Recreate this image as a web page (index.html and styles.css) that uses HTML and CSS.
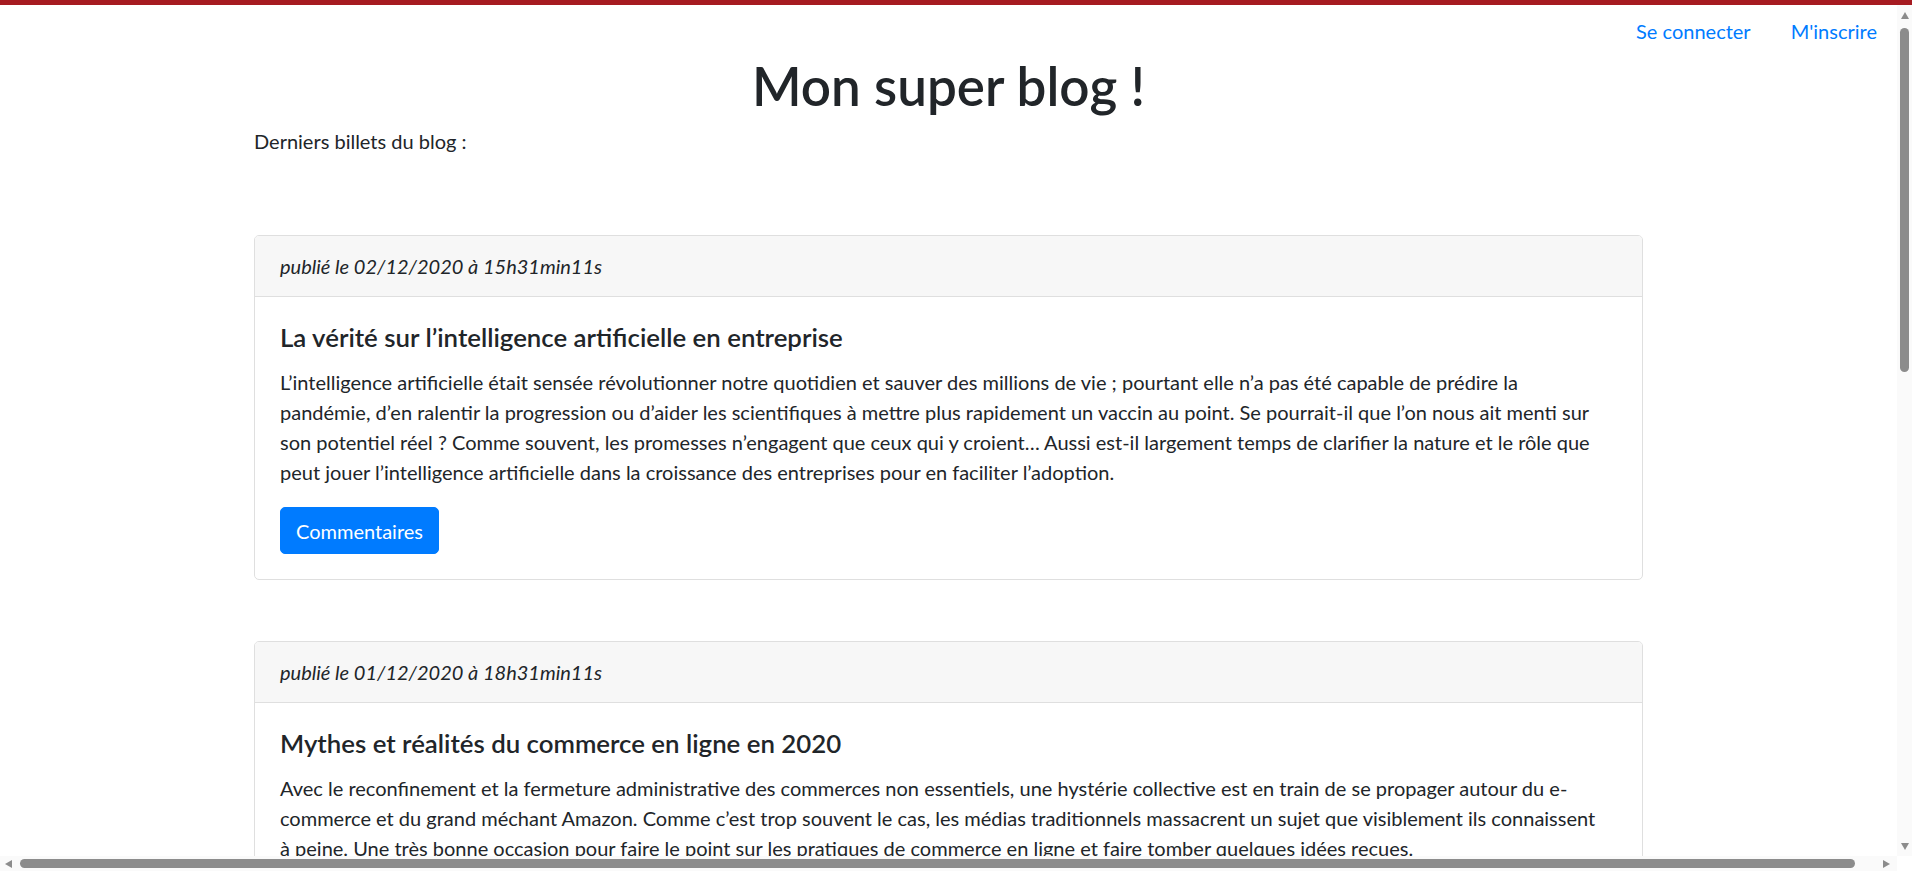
FILE: index.html
```html
<!DOCTYPE html>
<html lang="fr">
<head>
<meta charset="utf-8">
<title>Mon super blog !</title>
<link rel="stylesheet" href="styles.css">
</head>
<body>
<div class="topbar"></div>
<div class="viewport">
  <div class="page">
    <nav class="topnav">
      <a class="nav-link" href="#">Se connecter</a>
      <a class="nav-link" href="#">M'inscrire</a>
    </nav>
    <div class="container">
      <h1 class="site-title">Mon super blog !</h1>
      <p class="intro">Derniers billets du blog :</p>

      <div class="card">
        <div class="card-header"><em>publié le 02/12/2020 à 15h31min11s</em></div>
        <div class="card-body">
          <h5 class="card-title">La vérité sur l’intelligence artificielle en entreprise</h5>
          <p class="card-text">L’intelligence artificielle était sensée révolutionner notre quotidien et sauver des millions de vie ; pourtant elle n’a pas été capable de prédire la<br>pandémie, d’en ralentir la progression ou d’aider les scientifiques à mettre plus rapidement un vaccin au point. Se pourrait-il que l’on nous ait menti sur<br>son potentiel réel ? Comme souvent, les promesses n’engagent que ceux qui y croient… Aussi est-il largement temps de clarifier la nature et le rôle que<br>peut jouer l’intelligence artificielle dans la croissance des entreprises pour en faciliter l’adoption.</p>
          <a class="btn" href="#">Commentaires</a>
        </div>
      </div>

      <div class="card">
        <div class="card-header"><em>publié le 01/12/2020 à 18h31min11s</em></div>
        <div class="card-body">
          <h5 class="card-title">Mythes et réalités du commerce en ligne en 2020</h5>
          <p class="card-text">Avec le reconfinement et la fermeture administrative des commerces non essentiels, une hystérie collective est en train de se propager autour du e-<br>commerce et du grand méchant Amazon. Comme c’est trop souvent le cas, les médias traditionnels massacrent un sujet que visiblement ils connaissent<br>à peine. Une très bonne occasion pour faire le point sur les pratiques de commerce en ligne et faire tomber quelques idées reçues.</p>
          <a class="btn" href="#">Commentaires</a>
        </div>
      </div>
    </div>
  </div>
  <div class="vscroll">
    <span class="arrow arrow-up"></span>
    <span class="vthumb"></span>
    <span class="vspace"></span>
    <span class="arrow arrow-down"></span>
  </div>
</div>
<div class="hscroll">
  <div class="htrack">
    <span class="arrow arrow-left"></span>
    <span class="hthumb"></span>
    <span class="arrow arrow-right"></span>
  </div>
  <div class="corner"></div>
</div>
</body>
</html>
```
FILE: styles.css
```css
html, body {
  margin: 0;
  height: 100%;
  overflow: hidden;
}
body {
  display: flex;
  flex-direction: column;
  font-family: Lato, "Open Sans", "Noto Sans", sans-serif;
  font-size: 20px;
  line-height: 30px;
  color: #212529;
  background: #fff;
}
.topbar {
  height: 5px;
  background: #a61b21;
  flex: none;
}
.viewport {
  flex: 1;
  min-height: 0;
  display: flex;
}
.page {
  flex: 1;
  min-width: 0;
  overflow: hidden;
}
.topnav {
  display: flex;
  justify-content: flex-end;
  padding-top: 1px;
}
.nav-link {
  display: block;
  padding: 10px 20px;
  color: #007bff;
  text-decoration: none;
}
.container {
  width: 1389px;
  margin: 0 auto;
}
.site-title {
  margin: 0 0 10px;
  font-size: 53px;
  line-height: 60px;
  font-weight: 600;
  text-align: center;
}
.intro {
  margin: 0 0 79px;
}
.card {
  border: 1px solid #dfdfdf;
  border-radius: 5px;
  margin-bottom: 61px;
}
.card-header {
  padding: 15px 25px;
  background: #f7f7f7;
  border-bottom: 1px solid #dfdfdf;
  border-radius: 4px 4px 0 0;
}
.card-body {
  padding: 25px;
}
.card-title {
  margin: 0 0 15px;
  font-size: 25.8px;
  line-height: 30px;
  font-weight: 600;
}
.card-text {
  margin: 0 0 20px;
}
.btn {
  display: inline-block;
  padding: 7.5px 15px;
  border: 1px solid #007bff;
  border-radius: 5px;
  background: #007bff;
  color: #fff;
  text-decoration: none;
}
/* scrollbars */
.vscroll {
  flex: none;
  width: 15px;
  background: #fafafa;
  display: flex;
  flex-direction: column;
  align-items: center;
}
.vthumb {
  width: 9px;
  height: 344px;
  margin-top: 9px;
  border-radius: 5px;
  background: #8c8c8c;
}
.vspace { flex: 1; }
.arrow {
  width: 0;
  height: 0;
  border: 4px solid transparent;
}
.arrow-up {
  margin-top: 7px;
  border-bottom: 7px solid #8c8c8c;
  border-top-width: 0;
}
.arrow-down {
  margin-bottom: 6px;
  border-top: 7px solid #8c8c8c;
  border-bottom-width: 0;
}
.hscroll {
  flex: none;
  height: 15px;
  display: flex;
}
.htrack {
  flex: 1;
  display: flex;
  align-items: center;
  background: #fafafa;
}
.arrow-left {
  margin-left: 5px;
  border-right: 7px solid #8c8c8c;
  border-left-width: 0;
}
.hthumb {
  width: 1835px;
  height: 9px;
  margin-left: 8px;
  border-radius: 5px;
  background: #8c8c8c;
}
.arrow-right {
  margin-left: 28px;
  border-left: 7px solid #8c8c8c;
  border-right-width: 0;
}
.corner {
  width: 15px;
  background: #fff;
}
```
